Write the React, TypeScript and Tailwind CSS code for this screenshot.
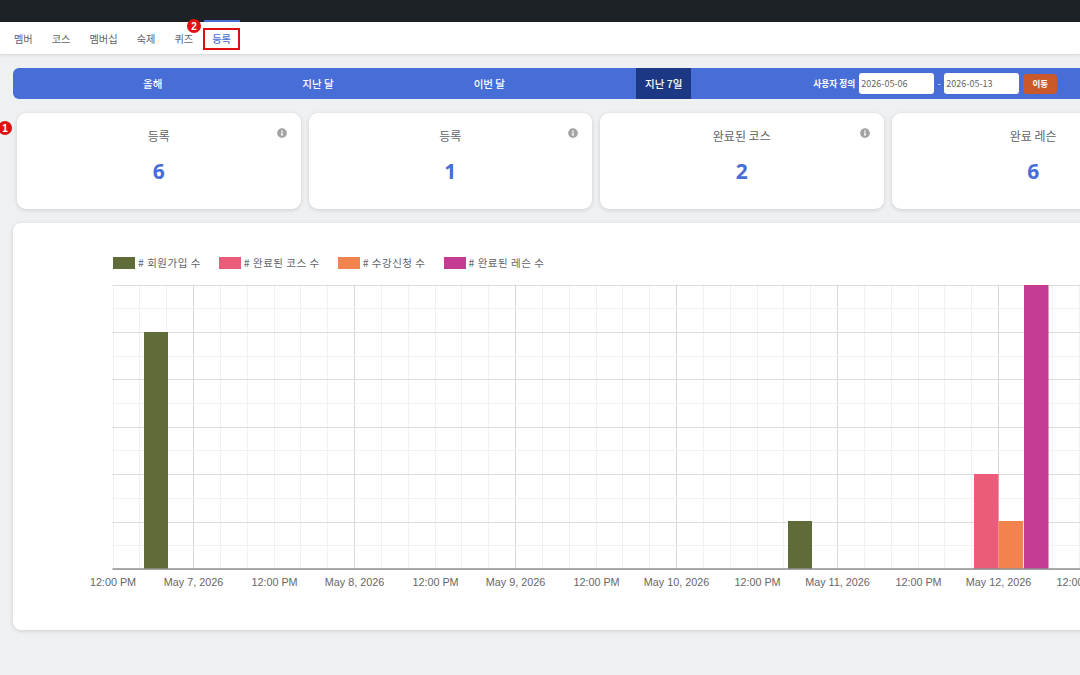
import { FaInfoCircle } from "react-icons/fa";

const font = { fontFamily: '"Noto Sans CJK KR", "Noto Sans", sans-serif' };

const navItems = ["멤버", "코스", "멤버십", "숙제", "퀴즈"];
const cards = [
  { title: "등록", value: "6" },
  { title: "등록", value: "1" },
  { title: "완료된 코스", value: "2" },
  { title: "완료 레슨", value: "6" },
];
const legend = [
  { label: "# 회원가입 수", color: "bg-[#5f6b38]" },
  { label: "# 완료된 코스 수", color: "bg-[#ea5c7a]" },
  { label: "# 수강신청 수", color: "bg-[#f2834e]" },
  { label: "# 완료된 레슨 수", color: "bg-[#c43b92]" },
];
const tabs = ["올해", "지난 달", "이번 달"];

const X0 = 112.5;
const STEP = 161;
const TOP = 284.5;
const H_STEP = 47.4;

const xLabels = [
  { x: 113, t: "12:00 PM" },
  { x: 193.5, t: "May 7, 2026" },
  { x: 274.5, t: "12:00 PM" },
  { x: 354.5, t: "May 8, 2026" },
  { x: 435.5, t: "12:00 PM" },
  { x: 515.5, t: "May 9, 2026" },
  { x: 596.5, t: "12:00 PM" },
  { x: 676.5, t: "May 10, 2026" },
  { x: 757.5, t: "12:00 PM" },
  { x: 837.5, t: "May 11, 2026" },
  { x: 918.5, t: "12:00 PM" },
  { x: 998.5, t: "May 12, 2026" },
  { x: 1079.5, t: "12:00 PM" },
];

const bars = [
  { x: 144, w: 24, y: 332, c: "#5f6b38" },
  { x: 788, w: 24, y: 521, c: "#5f6b38" },
  { x: 974, w: 24.5, y: 474, c: "#ea5c7a" },
  { x: 998.7, w: 24.5, y: 521, c: "#f2834e" },
  { x: 1024, w: 24.5, y: 285, c: "#c43b92" },
];

function Chart() {
  const minors: number[] = [];
  for (let i = 0; i <= 42; i++) minors.push(Math.round(X0 + (i * STEP) / 6) + 0.5);
  const hMinors: number[] = [];
  for (let i = 0; i <= 12; i++) hMinors.push(TOP + (i * H_STEP) / 2);
  return (
    <svg width="1000" height="330" viewBox="83 284 1000 330" className="block shrink-0 -ml-[30px]">
      {minors.map((x, i) => (
        <line key={"v" + i} x1={x} x2={x} y1={TOP} y2={569} stroke={i % 6 === 3 ? "#d8d8d8" : "#f1f1f1"} strokeWidth="1" />
      ))}
      {hMinors.map((y, i) => (
        <line key={"h" + i} x1={X0} x2={1100} y1={Math.round(y) + 0.5} y2={Math.round(y) + 0.5} stroke={i % 2 === 0 ? "#dcdcdc" : "#f1f1f1"} strokeWidth="1" />
      ))}
      {bars.map((b, i) => (
        <rect key={i} x={b.x} y={b.y} width={b.w} height={569 - b.y} fill={b.c} />
      ))}
      <line x1={X0} x2={1100} y1={569} y2={569} stroke="#8f8f8f" strokeWidth="1.5" />
      {xLabels.map((l, i) => (
        <text key={i} x={l.x} y={585.5} textAnchor="middle" fontSize="10.8" fill="#666" fontFamily='"Liberation Sans", Arial, sans-serif'>
          {l.t}
        </text>
      ))}
    </svg>
  );
}

export default function App() {
  return (
    <div style={font} className="relative w-[1080px] h-[675px] overflow-hidden bg-[#eff0f2]">
      <div className="h-[22px] bg-[#1d2227]" />
      <nav className="relative h-[32px] bg-white shadow-[0_1px_3px_rgba(0,0,0,0.12)] flex items-center pl-[14px] pt-[1px] gap-[19px] text-[10.2px] text-[#5f646b]">
        {navItems.map((n) => (
          <span key={n}>{n}</span>
        ))}
        <span className="relative text-[#476dd6] font-medium">등록</span>
        <span className="absolute left-[204px] top-[-2px] w-[36px] h-[2px] bg-[#476dd6]" />
        <span className="absolute left-[203px] top-[6px] w-[37px] h-[22px] border-[2px] border-[#e01010]" />
      </nav>

      <div className="flex flex-col pl-[13px] pt-[14px] w-[1200px]">
        <div className="h-[31px] bg-[#476dd6] rounded-l-[6px] flex items-stretch pl-[116px] text-white text-[10.5px]">
          <div className="flex items-stretch gap-[112px]">
            {tabs.map((t) => (
              <span key={t} className="px-[14px] flex items-center font-medium">{t}</span>
            ))}
            <span className="ml-[5px] px-[9px] flex items-center bg-[#1c3783] font-medium">지난 7일</span>
          </div>
          <div className="flex items-center ml-[122px]">
            <span className="text-[8.7px] font-bold">사용자 정의</span>
            <input readOnly value="2026-05-06" style={font} className="ml-[4px] w-[75px] h-[21px] bg-white rounded-[3px] px-[2px] text-[9px] text-[#666]" />
            <span className="w-[10px] text-center text-[8.5px]">-</span>
            <input readOnly value="2026-05-13" style={font} className="w-[75px] h-[21px] bg-white rounded-[3px] px-[2px] text-[9px] text-[#666]" />
            <span className="ml-[4px] w-[34px] h-[20px] bg-[#c9592a] rounded-[4px] flex items-center justify-center text-[8.5px] font-bold">이동</span>
          </div>
        </div>

        <div className="flex gap-[8px] mt-[14px] ml-[4px]">
          {cards.map((c, i) => (
            <div key={i} className="relative w-[283.5px] h-[96px] shrink-0 bg-white rounded-[9px] shadow-[0_1px_4px_rgba(0,0,0,0.14)] flex flex-col items-center pt-[13px]">
              <span className="text-[12px] leading-[20px] text-[#5f646b]">{c.title}</span>
              <span style={{ fontFamily: '"Noto Sans", sans-serif' }} className="mt-[10px] text-[21px] leading-[30px] font-bold text-[#476dd6]">{c.value}</span>
              {i < 3 && <FaInfoCircle className="absolute right-[14px] top-[15px] text-[#a3a3a3]" size={10} />}
            </div>
          ))}
        </div>

        <div className="mt-[14px] h-[407px] bg-white rounded-l-[8px] shadow-[0_1px_4px_rgba(0,0,0,0.14)] pl-[100px]">
          <div className="flex items-center gap-[18px] pt-[19px] h-[61px] text-[10.5px] text-[#5f646b] tracking-[0.5px]">
            {legend.map((l) => (
              <div key={l.label} className="flex items-center gap-[3px]">
                <span className={`w-[22px] h-[12px] ${l.color}`} />
                <span>{l.label}</span>
              </div>
            ))}
          </div>
          <Chart />
        </div>
      </div>

      <span style={{ fontFamily: '"Liberation Sans", sans-serif' }} className="absolute left-[-2px] top-[121px] w-[14px] h-[14px] rounded-full bg-[#e01010] text-white text-[10px] font-bold flex items-center justify-center">1</span>
      <span style={{ fontFamily: '"Liberation Sans", sans-serif' }} className="absolute left-[187px] top-[19px] w-[14px] h-[14px] rounded-full bg-[#e01010] text-white text-[10px] font-bold flex items-center justify-center">2</span>
    </div>
  );
}
